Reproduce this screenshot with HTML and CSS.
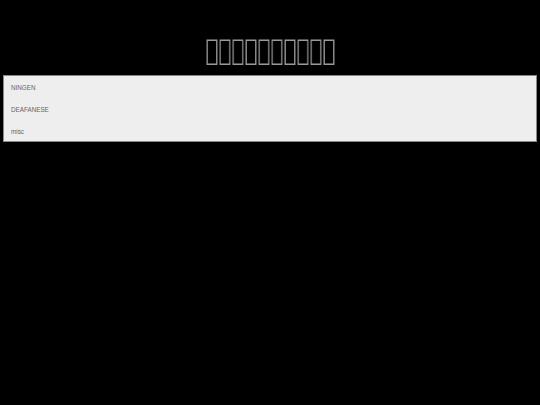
FILE: index.html
```html
<!DOCTYPE html>
<html>
<head>
<meta charset="utf-8">
<link rel="stylesheet" href="styles.css">
</head>
<body>
<header class="head">
  <h1 class="title">&#xE000;&#xE001;&#xE002;&#xE003;&#xE004;&#xE005;&#xE006;&#xE007;&#xE008;&#xE009;</h1>
</header>
<nav class="menu">
  <div class="item">NINGEN</div>
  <div class="item">DEAFANESE</div>
  <div class="item">misc</div>
</nav>
</body>
</html>
```
FILE: styles.css
```css
html, body {
  margin: 0;
  background: #000;
}
body {
  padding: 0 3px;
  font-family: "Liberation Sans", Arial, sans-serif;
}
.head {
  height: 75px;
  box-sizing: border-box;
  padding-top: 25px;
  display: flex;
  align-items: center;
  justify-content: center;
}
.title {
  margin: 0;
  font-family: "DejaVu Sans Condensed", "DejaVu Sans", sans-serif;
  font-size: 29px;
  font-weight: normal;
  line-height: 34px;
  color: #999;
  transform: scaleX(0.83);
  will-change: transform;
}
.menu {
  background: #eee;
  border: 1px solid #888;
  padding: 4px 7px 0;
  height: 67px;
  box-sizing: border-box;
}
.item {
  font-size: 6.3px;
  color: #666;
  height: 22px;
  line-height: 16px;
}
```
